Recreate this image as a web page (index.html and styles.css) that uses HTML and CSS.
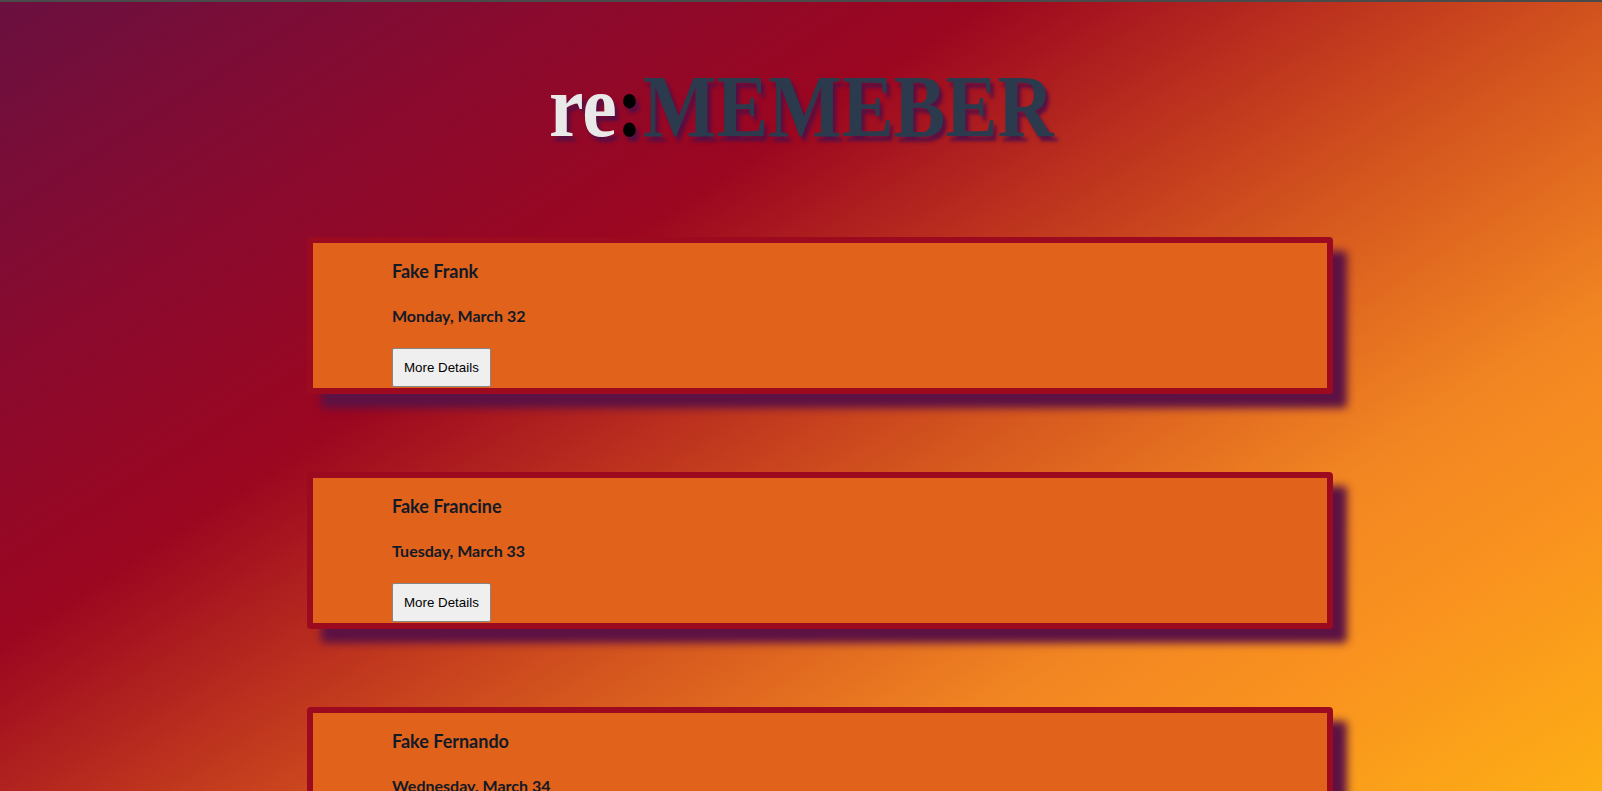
FILE: index.html
```html
<!DOCTYPE html>
<html lang="en">
<head>
<meta charset="utf-8">
<title>re:MEMEBER</title>
<link rel="stylesheet" href="styles.css">
</head>
<body>
<div class="topbar"></div>
<header class="masthead">
  <h1 class="logo"><span class="logo-inner"><span class="logo-re">re</span><span class="logo-colon">:</span><span class="logo-main">MEMEBER</span></span></h1>
</header>
<main class="cards">
  <section class="card">
    <h2 class="card-name">Fake Frank</h2>
    <p class="card-date">Monday, March 32</p>
    <button class="card-btn">More Details</button>
  </section>
  <section class="card">
    <h2 class="card-name">Fake Francine</h2>
    <p class="card-date">Tuesday, March 33</p>
    <button class="card-btn">More Details</button>
  </section>
  <section class="card">
    <h2 class="card-name">Fake Fernando</h2>
    <p class="card-date">Wednesday, March 34</p>
    <button class="card-btn">More Details</button>
  </section>
</main>
</body>
</html>
```
FILE: styles.css
```css
html {
  height: 100%;
  overflow: hidden;
  background: linear-gradient(147deg, #6a1040 0%, #8a0a2e 20%, #9b0620 35%, #c23a1e 50%, #d4551e 58%, #f28622 74%, #f9921f 84%, #fdae15 100%);
}

body {
  margin: 0;
  height: 100%;
}

.topbar {
  height: 2px;
  background: #4a4a4a;
}

.masthead {
  padding-top: 60px;
  text-align: center;
}

.logo {
  margin: 0;
  font-family: "Liberation Serif", "Times New Roman", serif;
  font-weight: 700;
  font-size: 89px;
  line-height: 89px;
  text-shadow: 4px 5px 4px rgba(82, 14, 70, 0.9);
}

.logo-inner {
  display: inline-block;
  transform: scaleX(0.875);
  transform-origin: center;
}

.logo-re {
  color: #e9e9e9;
}

.logo-colon {
  color: #000;
}

.logo-main {
  color: #2b3b4d;
}

.cards {
  margin-top: 86px;
  margin-left: 307px;
  width: 1026px;
}

.card {
  box-sizing: border-box;
  height: 157px;
  margin-bottom: 78px;
  padding: 17px 0 1px 79px;
  background: #e1621a;
  border: 6px solid #9c0a20;
  border-radius: 4px;
  box-shadow: 14px 14px 9px #5c1244;
  font-family: Lato, "Noto Sans", sans-serif;
  color: #111a26;
}

.card-name {
  margin: 0;
  font-size: 18px;
  font-weight: 700;
  line-height: 22px;
}

.card-date {
  margin: 24px 0 0;
  font-size: 16px;
  font-weight: 700;
  line-height: 19px;
}

.card-btn {
  display: block;
  margin-top: 23px;
  padding: 11px 11px;
  font-family: "Liberation Sans", Arial, sans-serif;
  font-size: 13.333px;
  line-height: 15px;
  color: #000;
  background: #efefef;
  border: 1px solid #858585;
  border-radius: 2px;
}
```
